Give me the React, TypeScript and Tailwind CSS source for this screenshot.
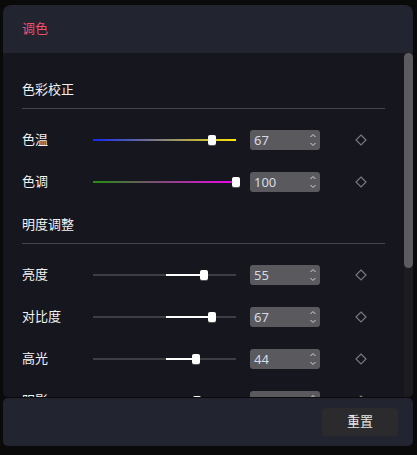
import React from "react";

type Row = {
  label: string;
  value: number;
  track?: string;
};

const colorRows: Row[] = [
  { label: "色温", value: 67, track: "bg-linear-to-r/srgb from-[#1428f0] to-[#ffe600]" },
  { label: "色调", value: 100, track: "bg-linear-to-r/srgb from-[#1f8f10] to-[#f000f0]" },
];

const lightRows: Row[] = [
  { label: "亮度", value: 55 },
  { label: "对比度", value: 67 },
  { label: "高光", value: 44 },
  { label: "阴影", value: 45 },
];

const Diamond = () => (
  <svg width="12" height="12" viewBox="0 0 12 12" className="block">
    <path d="M6 1 L11 6 L6 11 L1 6 Z" fill="none" stroke="#77777c" strokeWidth="1.2" />
  </svg>
);

const Spinner = () => (
  <svg width="8" height="20" viewBox="0 0 8 20" className="block">
    <path d="M1.5 7 L4 4.5 L6.5 7" fill="none" stroke="#d4d4d8" strokeWidth="1" />
    <path d="M1.5 13 L4 15.5 L6.5 13" fill="none" stroke="#d4d4d8" strokeWidth="1" />
  </svg>
);

const Slider = ({ value, track }: { value: number; track?: string }) => {
  const pct = ((value + 100) / 200) * 100;
  return (
    <div className="relative h-[10px] w-[143px]">
      {track ? (
        <div className={`absolute left-0 right-0 top-[4px] h-[2px] ${track}`} />
      ) : (
        <>
          <div className="absolute left-0 right-0 top-[4px] h-[2px] bg-[#3d3d44]" />
          <div
            className="absolute top-[4px] h-[2px] bg-white"
            style={{ left: "51%", width: `${pct - 51}%` }}
          />
        </>
      )}
      <div
        className="absolute top-0 h-[10px] w-[8px] -translate-x-1/2 rounded-[2px] bg-white shadow-[0_1px_0_#555]"
        style={{ left: `${pct}%` }}
      />
    </div>
  );
};

const SliderRow = ({ row }: { row: Row }) => (
  <div className="flex h-[42px] items-center">
    <div className="w-[71px] text-[13px] text-[#f2f2f2]">{row.label}</div>
    <Slider value={row.value} track={row.track} />
    <div className="ml-[14px] flex h-[20px] w-[70px] items-center justify-between rounded-[3px] bg-[#5a595e] pl-[4px] pr-[3px]">
      <span className="text-[13px] leading-none text-[#d6dce6]">{row.value}</span>
      <Spinner />
    </div>
    <div className="ml-[35px]">
      <Diamond />
    </div>
  </div>
);

const Section = ({ title, rows, className }: { title: string; rows: Row[]; className?: string }) => (
  <div className={className}>
    <div className="h-[20px] text-[13px] leading-[20px] text-[#f2f2f2]">{title}</div>
    <div className="mt-[9px] h-px bg-[#46464d]" />
    <div className="mt-[10px]">
      {rows.map((r) => (
        <SliderRow key={r.label} row={r} />
      ))}
    </div>
  </div>
);

export default function App() {
  return (
    <div
      className="h-[455px] w-[417px] overflow-hidden bg-[#0a0a0b] pl-[3px] pt-[5px]"
      style={{ fontFamily: '"Noto Sans", "Noto Sans CJK SC", sans-serif' }}
    >
      <div className="flex w-[410px] flex-col">
        <div className="flex h-[48px] items-center rounded-t-[8px] bg-[#22242f] pl-[19px]">
          <span className="text-[13px] text-[#f24d6e]">调色</span>
        </div>
        <div className="flex h-[344px] overflow-hidden rounded-b-[5px] bg-[#16161e]">
          <div className="flex-1 overflow-hidden pl-[19px] pr-[19px] pt-[26px]">
            <Section title="色彩校正" rows={colorRows} />
            <Section title="明度调整" rows={lightRows} className="mt-[11px]" />
          </div>
          <div className="w-[9px] bg-[#1c1c20]">
            <div className="h-[215px] rounded-[5px] bg-[#5c5b60]" />
          </div>
        </div>
        <div className="mt-px flex h-[48px] items-center justify-end rounded-[5px] bg-[#22242f] pr-[15px]">
          <button className="h-[28px] w-[76px] rounded-[4px] bg-[#2b2b2d] text-[13px] text-[#e6e6e6]">
            重置
          </button>
        </div>
      </div>
    </div>
  );
}
